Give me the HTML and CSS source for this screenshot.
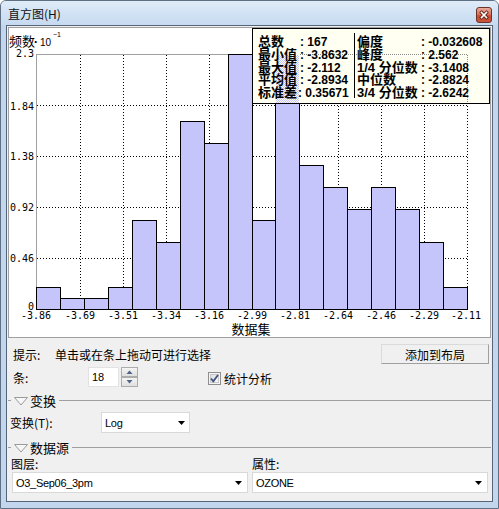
FILE: index.html
```html
<!DOCTYPE html>
<html>
<head>
<meta charset="utf-8">
<title>直方图</title>
<link rel="stylesheet" href="styles.css">
</head>
<body>
<div class="window">
  <div class="titlebar">
    <span class="title">直方图(H)</span>
    <svg class="close" width="16" height="16" viewBox="0 0 16 16">
      <defs>
        <linearGradient id="cg" x1="0" y1="0" x2="0" y2="1">
          <stop offset="0" stop-color="#eab0a2"/>
          <stop offset="0.45" stop-color="#d8735f"/>
          <stop offset="0.55" stop-color="#c94a33"/>
          <stop offset="1" stop-color="#c8553a"/>
        </linearGradient>
      </defs>
      <rect x="0.5" y="0.5" width="15" height="15" rx="2.5" fill="url(#cg)" stroke="#6e3327"/>
      <path d="M5.5 5.5l5 5M10.5 5.5l-5 5" stroke="#5a1f14" stroke-width="3.2" stroke-linecap="square"/>
      <path d="M5.5 5.5l5 5M10.5 5.5l-5 5" stroke="#ffffff" stroke-width="1.6" stroke-linecap="square"/>
    </svg>
  </div>
  <div class="client">
    <div class="chart">
      <svg class="plot" width="481" height="309" viewBox="9 28 481 309">
        <defs>
          <pattern id="dither" width="2" height="2" patternUnits="userSpaceOnUse">
            <rect width="2" height="2" fill="#fffff2"/>
            <rect width="1" height="1" fill="#c5c5fb"/>
            <rect x="1" y="1" width="1" height="1" fill="#c5c5fb"/>
          </pattern>
        </defs>
        <text class="ytitle" x="9" y="46">频数</text>
        <text class="ydot" x="34" y="46">·</text>
        <text class="yten" x="40" y="46">10</text>
        <text class="yexp" x="53" y="37">−1</text>

        <g class="grid">
          <path d="M80.5 55V309M123.5 55V309M166.5 55V309M209.5 55V309M252.5 55V309M295.5 55V309M338.5 55V309M381.5 55V309M424.5 55V309M467.5 55V309"/>
          <path d="M37 105.5H467M37 156.5H467M37 207.5H467M37 258.5H467"/>
        </g>
        <path class="axis" d="M36.5 54V309M36 54.5H468"/>

        <g class="bars">
          <rect x="36.5" y="287.5" width="24" height="22"/>
          <rect x="60.5" y="298.5" width="24" height="11"/>
          <rect x="84.5" y="298.5" width="24" height="11"/>
          <rect x="108.5" y="287.5" width="24" height="22"/>
          <rect x="132.5" y="220.5" width="24" height="89"/>
          <rect x="156.5" y="242.5" width="24" height="67"/>
          <rect x="180.5" y="121.5" width="24" height="188"/>
          <rect x="204.5" y="143.5" width="24" height="166"/>
          <rect x="228.5" y="54.5" width="24" height="255"/>
          <rect x="252.5" y="220.5" width="23" height="89"/>
          <rect x="275.5" y="54.5" width="24" height="255"/>
          <rect x="299.5" y="165.5" width="24" height="144"/>
          <rect x="323.5" y="187.5" width="24" height="122"/>
          <rect x="347.5" y="209.5" width="24" height="100"/>
          <rect x="371.5" y="187.5" width="24" height="122"/>
          <rect x="395.5" y="209.5" width="24" height="100"/>
          <rect x="419.5" y="242.5" width="24" height="67"/>
          <rect x="443.5" y="287.5" width="24" height="22"/>
        </g>

        <g class="ylab">
          <text x="34" y="57">2.3</text>
          <text x="34" y="109.5">1.84</text>
          <text x="34" y="160">1.38</text>
          <text x="34" y="211">0.92</text>
          <text x="34" y="262">0.46</text>
          <text x="34" y="310">0</text>
        </g>
        <g class="xlab">
          <text x="36" y="319">-3.86</text>
          <text x="80" y="319">-3.69</text>
          <text x="123" y="319">-3.51</text>
          <text x="166" y="319">-3.34</text>
          <text x="209" y="319">-3.16</text>
          <text x="252" y="319">-2.99</text>
          <text x="295" y="319">-2.81</text>
          <text x="338" y="319">-2.64</text>
          <text x="381" y="319">-2.46</text>
          <text x="424" y="319">-2.29</text>
          <text x="466" y="319">-2.11</text>
        </g>
        <text class="xtitle" x="251" y="334">数据集</text>

        <g class="stats">
          <rect class="st-box" x="252.5" y="28.5" width="237" height="75"/>
          <rect x="276" y="55" width="23" height="48" fill="url(#dither)"/>
          <path class="st-dots" d="M300 54.5H467M467.5 55V103"/>
          <path class="st-sep" d="M354.5 33V98"/>
          <text class="st-l" x="258" y="46">总数</text>
          <text class="st-l" x="258" y="59">最小值</text>
          <text class="st-l" x="258" y="72">最大值</text>
          <text class="st-l" x="258" y="84">平均值</text>
          <text class="st-l" x="258" y="97">标准差</text>
          <text class="st-v" x="300" y="46">: 167</text>
          <text class="st-v" x="300" y="59">: -3.8632</text>
          <text class="st-v" x="300" y="72">: -2.112</text>
          <text class="st-v" x="300" y="84">: -2.8934</text>
          <text class="st-v" x="298" y="97">: 0.35671</text>
          <text class="st-l" x="357" y="46">偏度</text>
          <text class="st-l" x="357" y="59">峰度</text>
          <text class="st-l" x="357" y="72">1/4 分位数</text>
          <text class="st-l" x="357" y="84">中位数</text>
          <text class="st-l" x="357" y="97">3/4 分位数</text>
          <text class="st-v" x="421" y="46">: -0.032608</text>
          <text class="st-v" x="421" y="59">: 2.562</text>
          <text class="st-v" x="421" y="72">: -3.1408</text>
          <text class="st-v" x="421" y="84">: -2.8824</text>
          <text class="st-v" x="421" y="97">: -2.6242</text>
        </g>
      </svg>
    </div>

    <div class="row hint-row">
      <span class="lbl-hint">提示:</span>
      <span class="hint">单击或在条上拖动可进行选择</span>
      <button class="btn" type="button">添加到布局</button>
    </div>

    <div class="row bins-row">
      <span class="lbl-bins">条:</span>
      <span class="spin-input">18</span>
      <svg class="spin-btns" width="17" height="20" viewBox="0 0 17 20">
        <defs>
          <linearGradient id="sg" x1="0" y1="0" x2="0" y2="1">
            <stop offset="0" stop-color="#f6f6f6"/>
            <stop offset="1" stop-color="#dedede"/>
          </linearGradient>
        </defs>
        <rect x="0.5" y="0.5" width="16" height="9" fill="url(#sg)" stroke="#acacac"/>
        <rect x="0.5" y="10.5" width="16" height="9" fill="url(#sg)" stroke="#acacac"/>
        <path d="M5.5 7h6l-3-3.5z" fill="#4f6384"/>
        <path d="M5.5 13h6l-3 3.5z" fill="#4f6384"/>
      </svg>
      <span class="check">
        <svg class="check-box" width="13" height="13" viewBox="0 0 13 13">
          <defs>
            <linearGradient id="kg" x1="0" y1="0" x2="1" y2="1">
              <stop offset="0" stop-color="#dcdcdc"/>
              <stop offset="1" stop-color="#fbfbfb"/>
            </linearGradient>
          </defs>
          <rect x="0.5" y="0.5" width="12" height="12" fill="#f4f4f4" stroke="#8f8f8f"/>
          <rect x="2.5" y="2.5" width="8" height="8" fill="url(#kg)" stroke="#c8c8c8"/>
          <path d="M3 6.5l2.3 2.8L10 3" fill="none" stroke="#3d5284" stroke-width="1.8"/>
        </svg>
        <span>统计分析</span>
      </span>
    </div>

    <div class="group">
      <span class="dash"></span>
      <svg class="tri" width="14" height="9" viewBox="0 0 14 9"><path d="M0.5 0.5H13.5L7 8z" fill="#f7f7f7" stroke="#9a9a9a"/></svg>
      <span class="group-title">变换</span>
      <span class="group-line"></span>
    </div>

    <div class="row trans-row">
      <span class="lbl-trans">变换(T):</span>
      <div class="combo combo-log">
        <span class="combo-text">Log</span>
        <svg class="arrow" width="7" height="4" viewBox="0 0 7 4"><path d="M0 0h7L3.5 4z" fill="#000"/></svg>
      </div>
    </div>

    <div class="group group-src">
      <span class="dash"></span>
      <svg class="tri" width="14" height="9" viewBox="0 0 14 9"><path d="M0.5 0.5H13.5L7 8z" fill="#f7f7f7" stroke="#9a9a9a"/></svg>
      <span class="group-title">数据源</span>
      <span class="group-line"></span>
    </div>

    <div class="src-labels">
      <span>图层:</span>
      <span>属性:</span>
    </div>
    <div class="src-combos">
      <div class="combo">
        <span class="combo-text">O3_Sep06_3pm</span>
        <svg class="arrow" width="7" height="4" viewBox="0 0 7 4"><path d="M0 0h7L3.5 4z" fill="#000"/></svg>
      </div>
      <div class="combo">
        <span class="combo-text">OZONE</span>
        <svg class="arrow" width="7" height="4" viewBox="0 0 7 4"><path d="M0 0h7L3.5 4z" fill="#000"/></svg>
      </div>
    </div>
  </div>
</div>
</body>
</html>
```

FILE: styles.css
```css
* {
  box-sizing: border-box;
  margin: 0;
  padding: 0;
}

html, body {
  width: 499px;
  height: 509px;
  overflow: hidden;
  background: #ffffff;
}

body {
  font-family: "Noto Sans CJK SC", "Liberation Sans", sans-serif;
  font-size: 12px;
  color: #000;
}

.window {
  width: 499px;
  height: 509px;
  display: flex;
  flex-direction: column;
  border: 1px solid #5f7085;
  border-radius: 6px 6px 0 0;
  background: #c2d6ee;
  padding: 0 5px 6px 5px;
}

.titlebar {
  height: 24px;
  flex: none;
  margin: 0 -5px;
  padding: 0 6px 0 7px;
  display: flex;
  align-items: flex-start;
  justify-content: space-between;
  border-radius: 5px 5px 0 0;
  background: linear-gradient(180deg, #e1ecf8 0%, #d3e3f5 45%, #c6daf0 100%);
}

.title {
  margin-top: 6px;
  font-size: 12px;
  line-height: 14px;
  color: #111;
}

.close {
  display: block;
  margin-top: 6px;
}

.client {
  flex: 1;
  display: flex;
  flex-direction: column;
  border: 1px solid #56657a;
  background: #f0f0f0;
}

.chart {
  flex: none;
  height: 311px;
  margin: 1px 1px 0 1px;
  border: 1px solid #a0a0a0;
  background: #ffffff;
}

.plot {
  display: block;
}

.ytitle, .xtitle {
  font-family: "Noto Sans CJK SC", sans-serif;
  font-size: 13px;
  fill: #000;
}

.xtitle {
  text-anchor: middle;
}

.ydot {
  font-family: "Liberation Sans", sans-serif;
  font-size: 12px;
  font-weight: bold;
}

.yten {
  font-family: "Liberation Sans", sans-serif;
  font-size: 10px;
}

.yexp {
  font-family: "Liberation Sans", sans-serif;
  font-size: 7px;
}

.grid path {
  fill: none;
  stroke: #000;
  stroke-width: 1;
  stroke-dasharray: 1 2;
}

.axis {
  fill: none;
  stroke: #a0a0a0;
}

.bars rect {
  fill: #c5c5fb;
  stroke: #000;
  stroke-width: 1;
}

.ylab text, .xlab text {
  font-family: "DejaVu Sans Mono", "Liberation Mono", monospace;
  font-size: 10px;
  fill: #000;
}

.ylab text {
  text-anchor: end;
}

.xlab text {
  text-anchor: middle;
}

.st-box {
  fill: #fffff2;
  stroke: #000;
}

.st-dots {
  fill: none;
  stroke: #8a8a8a;
  stroke-dasharray: 1 1;
}

.st-sep {
  stroke: #000;
}

.st-l {
  font-family: "Liberation Sans", "Noto Sans CJK SC", sans-serif;
  font-size: 13px;
  font-weight: bold;
  fill: #000;
}

.st-v {
  font-family: "Liberation Sans", sans-serif;
  font-size: 12px;
  font-weight: bold;
  fill: #000;
}

/* controls */
.row {
  flex: none;
  display: flex;
  align-items: center;
}

.hint-row {
  height: 20px;
  margin-top: 6px;
  padding-left: 6px;
  padding-right: 3px;
}

.lbl-hint {
  width: 42px;
}

.btn {
  margin-left: auto;
  width: 108px;
  height: 20px;
  font-family: "Noto Sans CJK SC", sans-serif;
  font-size: 12px;
  color: #000;
  background: #f0f0f0;
  border: 1px solid;
  border-color: #dadada #9f9f9f #9f9f9f #dadada;
}

.bins-row {
  height: 20px;
  margin-top: 3px;
  padding-left: 6px;
}

.lbl-bins {
  width: 75px;
}

.spin-input {
  width: 31px;
  height: 20px;
  padding-left: 3px;
  line-height: 18px;
  font-family: "Liberation Sans", sans-serif;
  font-size: 11px;
  background: #fff;
  border: 1px solid #e2e2e2;
}

.spin-btns {
  display: block;
  margin-left: 2px;
}

.check {
  display: flex;
  align-items: center;
  margin-left: 70px;
  margin-top: 2px;
}

.check-box {
  display: block;
  margin-right: 3px;
}

.group {
  flex: none;
  height: 13px;
  margin-top: 7px;
  display: flex;
  align-items: center;
}

.group-src {
  margin-top: 8px;
}

.dash {
  width: 3px;
  height: 1px;
  margin-left: 1px;
  background: #a0a0a0;
}

.tri {
  display: block;
  margin-left: 3px;
  margin-top: 1px;
}

.group-title {
  margin-left: 2px;
  font-size: 13px;
  line-height: 13px;
}

.group-line {
  flex: 1;
  height: 1px;
  margin-left: 3px;
  margin-right: 1px;
  background: #a0a0a0;
}

.trans-row {
  height: 21px;
  margin-top: 5px;
  padding-left: 3px;
}

.lbl-trans {
  width: 91px;
}

.combo {
  height: 21px;
  display: flex;
  align-items: center;
  justify-content: space-between;
  padding: 0 5px 0 3px;
  background: #fff;
  border: 1px solid #d9d9d9;
}

.combo-log {
  width: 89px;
  padding-right: 4px;
}

.combo-text {
  font-family: "Liberation Sans", sans-serif;
  font-size: 11px;
  letter-spacing: -0.3px;
}

.arrow {
  display: block;
}

.src-labels {
  flex: none;
  height: 14px;
  line-height: 14px;
  margin-top: 3px;
  padding-left: 4px;
  display: grid;
  grid-template-columns: 241px 1fr;
}

.src-combos {
  flex: none;
  margin-top: 1px;
  padding: 0 4px 0 5px;
  display: grid;
  grid-template-columns: 1fr 1fr;
  column-gap: 4px;
}
```
